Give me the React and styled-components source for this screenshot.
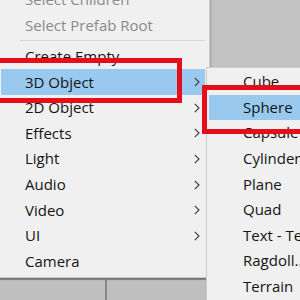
import React from "react";
import styled, { createGlobalStyle } from "styled-components";

const GlobalStyle = createGlobalStyle`
  html, body { margin: 0; padding: 0; overflow: hidden; background: #c2c2c2; }
`;

const ROW = 25.6;

const Stage = styled.div`
  position: relative;
  width: 300px;
  height: 300px;
  overflow: hidden;
  font-family: "Open Sans", "Noto Sans", sans-serif;
  font-size: 15px;
`;

const Backdrop = styled.div`
  display: flex;
  flex-direction: column;
  height: 100%;
`;

const TopArea = styled.div`
  flex: 1;
  background: #c3c3c3;
`;

const BottomPanel = styled.div`
  height: 20px;
  border-top: 2px solid #878787;
  display: grid;
  grid-template-columns: 107px 1fr;
  background: #bfbfbf;
`;

const Pane = styled.div`
  border-right: ${(p) => (p.$divider ? "2px solid #858585" : "none")};
`;

const Menu = styled.div`
  position: absolute;
  top: ${(p) => p.$top}px;
  left: ${(p) => p.$left}px;
  width: ${(p) => p.$width}px;
  box-sizing: border-box;
  background: #f0f0f0;
  border: 1px solid #cdcdcd;
  padding: ${(p) => p.$pad};
  box-shadow: 1px 1px 2px rgba(0, 0, 0, 0.18);
`;

const Item = styled.div`
  height: ${ROW}px;
  display: flex;
  align-items: center;
  padding-left: ${(p) => p.$indent}px;
  background: ${(p) => (p.$active ? "#99c9ef" : "transparent")};
  color: ${(p) => (p.$disabled ? "#8a8a8a" : "#141414")};
  white-space: nowrap;
`;

const Label = styled.span`
  line-height: 1;
`;

const Arrow = styled.svg`
  margin-left: auto;
  margin-right: 5px;
  width: 6px;
  height: 10px;
  flex: none;
`;

const Separator = styled.div`
  height: 5.6px;
  display: flex;
  align-items: center;
  padding-left: 19px;
  &::after {
    content: "";
    flex: 1;
    border-top: 1px solid #d6d6d6;
  }
`;

const Callout = styled.div`
  position: absolute;
  top: ${(p) => p.$top}px;
  left: ${(p) => p.$left}px;
  width: ${(p) => p.$width}px;
  height: ${(p) => p.$height}px;
  box-sizing: border-box;
  border: 5px solid #e50f1b;
`;

const Chevron = () => (
  <Arrow viewBox="0 0 6 10">
    <polyline points="0.8,0.8 5,5 0.8,9.2" fill="none" stroke="#3a3a3a" strokeWidth="1.1" />
  </Arrow>
);

const mainItems = [
  { label: "Select Children", disabled: true },
  { label: "Select Prefab Root", disabled: true },
  { sep: true },
  { label: "Create Empty" },
  { label: "3D Object", sub: true, active: true },
  { label: "2D Object", sub: true },
  { label: "Effects", sub: true },
  { label: "Light", sub: true },
  { label: "Audio", sub: true },
  { label: "Video", sub: true },
  { label: "UI", sub: true },
  { label: "Camera" },
];

const subItems = [
  "Cube",
  "Sphere",
  "Capsule",
  "Cylinder",
  "Plane",
  "Quad",
  "Text - TextMeshPro",
  "Ragdoll...",
  "Terrain",
  "Tree",
];

export default function App() {
  return (
    <>
      <GlobalStyle />
      <Stage>
        <Backdrop>
          <TopArea />
          <BottomPanel>
            <Pane $divider />
            <Pane />
          </BottomPanel>
        </Backdrop>

        <Menu $top={-16} $left={-2} $width={212} $pad="2px 4px 3px 2px">
          {mainItems.map((it, i) =>
            it.sep ? (
              <Separator key={i} />
            ) : (
              <Item key={i} $indent={24} $active={it.active} $disabled={it.disabled}>
                <Label>{it.label}</Label>
                {it.sub && <Chevron />}
              </Item>
            )
          )}
        </Menu>

        <Menu $top={67} $left={206} $width={140} $pad="1px 2px">
          {subItems.map((s) => (
            <Item key={s} $indent={34} $active={s === "Sphere"}>
              <Label>{s}</Label>
            </Item>
          ))}
        </Menu>

        <Callout $top={58} $left={-10} $width={192} $height={45} />
        <Callout $top={85} $left={202} $width={120} $height={49} />
      </Stage>
    </>
  );
}
